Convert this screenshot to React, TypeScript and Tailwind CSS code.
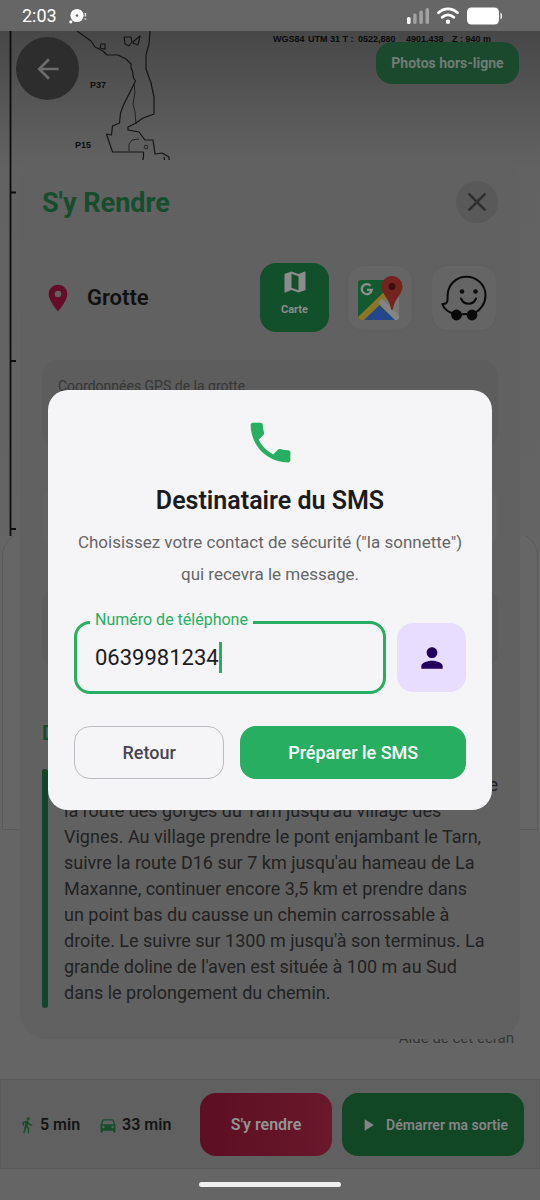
import { useState } from "react";
import type { ReactNode } from "react";
import {
  MdArrowBack,
  MdClose,
  MdDirectionsCar,
  MdDirectionsWalk,
  MdLocationOn,
  MdMap,
  MdPerson,
  MdPhone,
  MdPlayArrow,
} from "react-icons/md";

function StatusBar() {
  return (
    <header className="flex h-[31px] items-center justify-between bg-[#666666] pr-[37px] pl-[22px] text-white">
      <div className="flex items-center gap-3">
        <span className="text-lg leading-none">2:03</span>
        <svg className="h-4 w-[18px]" viewBox="0 0 18 16" aria-hidden="true">
          <circle cx="8" cy="7.5" r="6.6" fill="#fff" />
          <circle cx="8" cy="7.5" r="1.2" fill="#666" />
          <circle cx="1.8" cy="13.8" r="1.6" fill="#fff" />
          <path d="M16.4 5v3.6M16.4 10.2v1.6" stroke="#ddd" strokeWidth="1.6" />
        </svg>
      </div>
      <svg className="h-[19px] w-[97px]" viewBox="0 0 97 19" aria-hidden="true">
        <rect x="1" y="11" width="3.6" height="7" rx="1.6" fill="#fff" />
        <rect x="7.2" y="7.5" width="3.4" height="10.5" rx="1.6" fill="#a3a3a3" />
        <rect x="13.4" y="4.5" width="3.4" height="13.5" rx="1.6" fill="#a3a3a3" />
        <rect x="19.6" y="2" width="3.4" height="16" rx="1.6" fill="#a3a3a3" />
        <g fill="none" stroke="#fff" strokeWidth="2.8" strokeLinecap="round">
          <path d="M32.5 6.7c5.5-5.2 13.5-5.2 19 0" />
          <path d="M36.2 11.2c3.4-3.2 8.2-3.2 11.6 0" />
        </g>
        <circle cx="42" cy="15.8" r="2.2" fill="#fff" />
        <rect x="61" y="1.5" width="32" height="17" rx="4.5" fill="#fff" />
        <path d="M94.5 6.5c2 .6 2 6.4 0 7z" fill="#fff" />
      </svg>
    </header>
  );
}

function CaveMap() {
  return (
    <svg className="block w-full" viewBox="0 31 540 505" aria-hidden="true">
      <defs>
        <linearGradient id="map-shade" x1="0" y1="0" x2="0" y2="1">
          <stop offset="0" stopColor="#474747" />
          <stop offset="0.16" stopColor="#585858" />
          <stop offset="0.27" stopColor="#626262" />
          <stop offset="1" stopColor="#646464" />
        </linearGradient>
      </defs>
      <rect x="0" y="31" width="540" height="505" fill="url(#map-shade)" />
      <path d="M10.5 31V536M10 192.5h6M10 361h6M10 529h6" stroke="#0d0d0d" strokeWidth="1.8" fill="none" />
      <g fill="none" stroke="#151515" strokeWidth="1.2" strokeLinejoin="round">
        <path d="M77 31l14 10 4 6 8 4 4 4h11l8 4 5 5 0 4 1.5 3 1 7 2 3-7 14-5 10-3 8-1 10-7 3-1 9-5-1 6 18h31v5l-1 4" />
        <path d="M150 31l-1 13-3 11v14l5 14 3 14v17l-11 4-7 5-8 4v3l11 2 6 8h8l2 14 7-1 7 4v4l-4 1-1-5" />
        <path d="M134 84l1 8-2 12 2 8 1 12" strokeWidth="0.8" />
        <path d="M129 151v-7l3-4 7-1" strokeWidth="0.8" />
        <path d="M101 44h4v5l-5-1zM124 37h7l1 5-3 4-4-2zM134 41l6-5-2 9-5-2z" />
        <path d="M145 145l3 1-1 3-3-1z" strokeWidth="0.7" />
      </g>
      <g fontFamily="Liberation Sans, Arial, sans-serif" fontWeight="700" fontSize="9" fill="#0c0c0c">
        <text x="90" y="88">P37</text>
        <text x="75" y="148">P15</text>
        <text x="273" y="42">WGS84</text>
        <text x="308" y="42">UTM 31 T :</text>
        <text x="358" y="42">0522,880</text>
        <text x="406" y="42">4901,438</text>
        <text x="452" y="42">Z : 940 m</text>
      </g>
    </svg>
  );
}

function GoogleMapsLogo() {
  return (
    <svg className="size-[46px]" viewBox="0 0 46 46" aria-hidden="true">
      <defs>
        <clipPath id="maps-tile">
          <rect x="1" y="5" width="41" height="40" rx="3" />
        </clipPath>
      </defs>
      <g clipPath="url(#maps-tile)">
        <rect x="1" y="5" width="41" height="40" fill="#135a30" />
        <path d="M42 14v31h-4L20 27l15-13z" fill="#777" />
        <path d="M20 29L4 45h34z" fill="#24468a" />
        <path d="M1 42l28-27 3 6L7 45H1z" fill="#8b7526" />
        <path d="M21 28l4-4 17 17v4h-4z" fill="#858585" />
      </g>
      <path d="M13.5 10.8a5 5 0 1 0 1.2 4H10" fill="none" stroke="#8f8f8f" strokeWidth="2.3" />
      <path d="M35 1a10.6 10.6 0 0 0-10.6 10.6c0 7.5 7.6 11.5 9.7 22.3.2 1.2 1.6 1.2 1.8 0C38 23 45.6 19 45.6 11.6A10.6 10.6 0 0 0 35 1z" fill="#75231e" />
      <circle cx="35" cy="11.5" r="3.5" fill="#3b100c" />
    </svg>
  );
}

function WazeLogo() {
  return (
    <svg className="size-[46px]" viewBox="0 0 46 46" aria-hidden="true">
      <path
        d="M15 39.5C9 38 3 34.5 1.3 29c3.5.3 5.3-1.5 5.3-5v-3C6.6 10 15 1.7 25.5 1.7S44.5 10 44.5 20.5c0 8-5 15-12 18.2L15 39.5z"
        fill="none"
        stroke="#0a0a0a"
        strokeWidth="2"
        strokeLinejoin="round"
      />
      <circle cx="15.5" cy="40" r="5.4" fill="#0a0a0a" />
      <circle cx="31" cy="40" r="5.4" fill="#0a0a0a" />
      <circle cx="21" cy="16.5" r="2.3" fill="#0a0a0a" />
      <circle cx="34.5" cy="16.5" r="2.3" fill="#0a0a0a" />
      <path d="M20 23.5c3 7 12 7 15 0" fill="none" stroke="#0a0a0a" strokeWidth="2" strokeLinecap="round" />
    </svg>
  );
}

function AppTile({ label, children }: { label: string; children: ReactNode }) {
  return (
    <button
      type="button"
      aria-label={label}
      className="flex size-[66px] items-center justify-center rounded-2xl border border-[#5f5f5f] bg-[#656565]"
    >
      {children}
    </button>
  );
}

const accessLines = [
  "la route des gorges du Tarn jusqu'au village des",
  "Vignes. Au village prendre le pont enjambant le Tarn,",
  "suivre la route D16 sur 7 km jusqu'au hameau de La",
  "Maxanne, continuer encore 3,5 km et prendre dans",
  "un point bas du causse un chemin carrossable à",
  "droite. Le suivre sur 1300 m jusqu'à son terminus. La",
  "grande doline de l'aven est située à 100 m au Sud",
  "dans le prolongement du chemin.",
];

function DirectionsSheet() {
  return (
    <section className="absolute inset-x-5 top-40 flex flex-col rounded-[27px] bg-[#616161] px-[22px] pt-[21px] pb-[31px]">
      <div className="flex items-center justify-between">
        <h1 className="pt-0.5 text-[27px] leading-8 font-bold text-[#164d2d]">S'y Rendre</h1>
        <button
          type="button"
          aria-label="Fermer"
          className="flex size-[42px] items-center justify-center rounded-full bg-[#595959] text-[#303030]"
        >
          <MdClose className="size-8" />
        </button>
      </div>

      <div className="mt-10 flex items-center pr-px">
        <MdLocationOn className="size-8 text-[#650c28]" />
        <h2 className="ml-[13px] flex-1 text-[22px] leading-7 font-semibold text-[#111111]">Grotte</h2>
        <div className="flex items-center gap-[18px]">
          <button
            type="button"
            className="flex size-[69px] flex-col items-center rounded-2xl bg-[#12502b] pt-[5px] text-[#8c8c8c]"
          >
            <MdMap className="size-7" />
            <span className="mt-1 text-[11px] leading-5 font-bold">Carte</span>
          </button>
          <AppTile label="Google Maps">
            <GoogleMapsLogo />
          </AppTile>
          <AppTile label="Waze">
            <WazeLogo />
          </AppTile>
        </div>
      </div>

      <div className="mt-7 h-[88px] rounded-2xl bg-[#5d5d5d] px-4 pt-4 text-sm leading-5 text-[#363636]">
        Coordonnées GPS de la grotte
      </div>
      <div className="mt-10 h-[60px] rounded-2xl bg-[#636363]" />
      <div className="mt-10 h-20 rounded-2xl bg-[#5d5d5d]" />

      <h2 className="mt-[51px] text-xl leading-7 font-bold text-[#164d2d]">Description</h2>
      <div className="mt-[22px] flex gap-4">
        <div className="w-1.5 shrink-0 rounded-full bg-[#124726]" />
        <p className="flex-1 pt-[3px] pb-0.5 text-lg leading-[26px] whitespace-nowrap text-[#222222]">
          <span className="block text-right">Depuis Le Rozier, suivre</span>
          {accessLines.map((line) => (
            <span key={line} className="block">
              {line}
            </span>
          ))}
        </p>
      </div>
    </section>
  );
}

function BottomBar() {
  return (
    <footer className="border border-[#5a5a5a] bg-[#606060]">
      <div className="flex items-center pt-[13px] pr-[15px] pb-3 pl-[17px]">
        <div className="flex flex-1 items-center text-base font-semibold text-[#141414]">
          <MdDirectionsWalk className="size-[18px] text-[#164d2d]" />
          <span className="ml-1">5 min</span>
          <MdDirectionsCar className="ml-[18px] size-5 text-[#164d2d]" />
          <span className="ml-1">33 min</span>
        </div>
        <button
          type="button"
          className="h-[63px] w-[132px] rounded-2xl bg-linear-to-r from-[#5c0e22] to-[#6a182b] text-base font-semibold text-[#949494]"
        >
          S'y rendre
        </button>
        <button
          type="button"
          className="ml-2.5 flex h-[63px] w-[182px] items-center justify-center gap-2 rounded-2xl bg-[#124726] text-sm font-semibold text-[#858585]"
        >
          <MdPlayArrow className="size-5" />
          Démarrer ma sortie
        </button>
      </div>
    </footer>
  );
}

function RecipientDialog() {
  const [phone, setPhone] = useState("0639981234");
  return (
    <div className="absolute inset-0 flex items-center justify-center px-12">
      <div
        role="dialog"
        aria-labelledby="recipient-title"
        className="flex w-full flex-col items-center rounded-[20px] bg-[#f5f5f8] px-[26px] pt-[26px] pb-[31px]"
      >
        <MdPhone className="size-[53px] text-[#27ae60]" />
        <h2 id="recipient-title" className="mt-[17px] text-[25px] leading-[30px] font-semibold text-[#1c1b1f]">
          Destinataire du SMS
        </h2>
        <p className="mt-2.5 text-center text-[17px] leading-8 text-[#666666]">
          Choisissez votre contact de sécurité ("la sonnette")
          <br />
          qui recevra le message.
        </p>
        <div className="mt-[31px] flex w-full items-center gap-[11px]">
          <div className="relative flex h-[73px] min-w-0 flex-1 items-center rounded-2xl border-3 border-[#27ae60] pl-[18px]">
            <label
              htmlFor="phone"
              className="absolute -top-3.5 left-[13px] bg-[#f5f5f8] px-[5px] text-base leading-5 text-[#27ae60]"
            >
              Numéro de téléphone
            </label>
            <input
              id="phone"
              type="tel"
              value={phone}
              onChange={(event) => setPhone(event.target.value)}
              className="field-sizing-content max-w-full bg-transparent text-[22px] leading-8 text-[#1c1b1f] outline-none"
            />
            <span className="h-[31px] w-[3px] shrink-0 bg-[#27ae60]" />
          </div>
          <button
            type="button"
            aria-label="Choisir un contact"
            className="flex size-[69px] shrink-0 items-center justify-center rounded-2xl bg-[#e8ddff] text-[#22005d]"
          >
            <MdPerson className="size-8" />
          </button>
        </div>
        <div className="mt-8 grid w-full grid-cols-[2fr_3fr] gap-4">
          <button
            type="button"
            className="h-[53px] rounded-2xl border border-[#bcbcc0] text-lg font-medium text-[#49454f]"
          >
            Retour
          </button>
          <button type="button" className="h-[53px] rounded-2xl bg-[#27ae60] text-lg font-medium text-white">
            Préparer le SMS
          </button>
        </div>
      </div>
    </div>
  );
}

export default function App() {
  return (
    <main
      className="relative flex min-h-screen flex-col overflow-hidden bg-[#656565]"
      style={{ fontFamily: "Roboto, sans-serif" }}
    >
      <StatusBar />
      <div className="relative">
        <CaveMap />
        <div className="absolute inset-x-0 top-0 flex items-start justify-between pt-1.5 pr-[21px] pl-4">
          <button
            type="button"
            aria-label="Retour à la liste"
            className="flex size-[63px] items-center justify-center rounded-full bg-[#2d2d2d] text-[#6c6c6c]"
          >
            <MdArrowBack className="size-8" />
          </button>
          <button
            type="button"
            className="mt-[5px] h-[42px] w-[143px] rounded-2xl bg-[#1b492e] text-sm font-bold text-[#6f7d74]"
          >
            Photos hors-ligne
          </button>
        </div>
      </div>
      <div className="mx-0.5 -mt-1 h-[298px] rounded-t-3xl border border-[#5b5b5b] bg-[#666666]" />
      <a href="#aide" className="mt-auto mr-[26px] mb-[31px] self-end text-[15px] leading-5 text-[#363636]">
        Aide de cet écran
      </a>
      <BottomBar />
      <div className="flex h-[31px] shrink-0 items-center justify-center">
        <div className="h-[5px] w-[142px] rounded-full bg-[#eeeeee]" />
      </div>
      <DirectionsSheet />
      <RecipientDialog />
    </main>
  );
}
